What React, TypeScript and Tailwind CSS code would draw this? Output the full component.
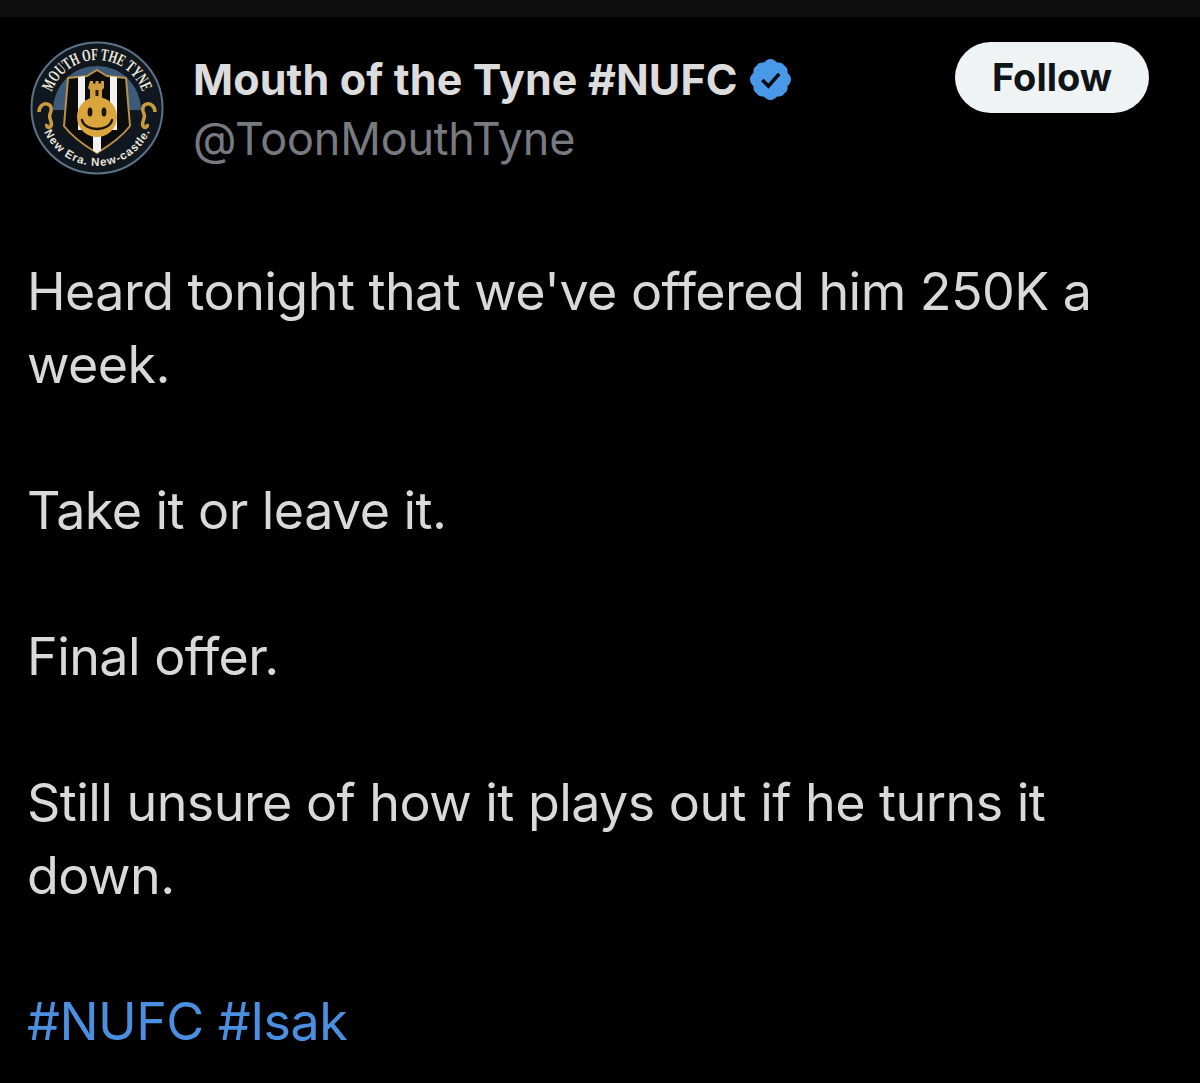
import React from "react";

const shield = "M68 30 L78 36 L97 38 L101 86 C92 98 78 107 68 113 C58 107 44 98 35 86 L39 38 L58 36 Z";

const Badge: React.FC = () => (
  <svg viewBox="0 0 136 136" className="w-[136px] h-[136px] shrink-0">
    <defs>
      <path id="topArc" d="M 20 68 A 48 48 0 0 1 116 68" />
      <path id="bottomArc" d="M 18 68 A 50 50 0 0 0 118 68" />
      <clipPath id="shieldClip">
        <path d={shield} />
      </clipPath>
    </defs>
    <circle cx="68" cy="68" r="65.500" fill="#10171f" stroke="#5d7388" strokeWidth="2" />
    <path d="M24 70 A44 44 0 0 1 112 70 Z" fill="#3d5a78" />
    <text fill="#efe9dc" fontFamily="'Liberation Serif', serif" fontWeight="700" fontSize="17">
      <textPath href="#topArc" startOffset="50%" textAnchor="middle" textLength="118" lengthAdjust="spacingAndGlyphs">
        MOUTH OF THE TYNE
      </textPath>
    </text>
    <text fill="#e8e4da" fontFamily="'Liberation Sans', sans-serif" fontWeight="700" fontSize="11.5" dominantBaseline="hanging">
      <textPath href="#bottomArc" startOffset="50%" textAnchor="middle">
        New Era. New-castle.
      </textPath>
    </text>
    <path d={shield} fill="#0b0b0b" stroke="#b8904a" strokeWidth="2" />
    <g clipPath="url(#shieldClip)">
      <rect x="49" y="30" width="7" height="60" fill="#f2f2f2" />
      <rect x="81" y="30" width="7" height="60" fill="#f2f2f2" />
      <rect x="64" y="95" width="8" height="18" fill="#f2f2f2" />
    </g>
    <path d="M61 41 h3 v2.500 h2.500 v-2.500 h3 v2.500 h2.500 v-2.500 h3 v7 l-2 2 v9 h2 v4 h-16 v-4 h2 v-9 l-2 -2 Z" fill="#cf9f3f" />
    <rect x="66.500" y="50" width="3" height="6" fill="#2a1e08" />
    <circle cx="68" cy="77" r="20" fill="#d9a53c" />
    <ellipse cx="61" cy="72" rx="2.400" ry="4.600" fill="#1b1405" />
    <ellipse cx="75" cy="72" rx="2.400" ry="4.600" fill="#1b1405" />
    <path d="M53 80 C56 92 80 92 83 80" fill="none" stroke="#1b1405" strokeWidth="2.400" strokeLinecap="round" />
    <path d="M10 72 C10 66 15 63 18 64 C23 65 23 70 21 74 C19 78 24 82 22 86 C20 89 17 87 18 84" fill="none" stroke="#c99a3f" strokeWidth="3.500" />
    <path d="M126 72 C126 66 121 63 118 64 C113 65 113 70 115 74 C117 78 112 82 114 86 C116 89 119 87 118 84" fill="none" stroke="#c99a3f" strokeWidth="3.500" />
  </svg>
);

const Verified: React.FC = () => (
  <svg viewBox="0 0 40 40" className="w-[41px] h-[41px] shrink-0">
    <path
      fill="#4a99e9"
      d="M20 0 C23 0 25 2 26.500 3.500 C29 3 32 3.500 33.500 6.500 C36.500 8 37 11 36.500 13.500 C38 15 40 17 40 20 C40 23 38 25 36.500 26.500 C37 29 36.500 32 33.500 33.500 C32 36.500 29 37 26.500 36.500 C25 38 23 40 20 40 C17 40 15 38 13.500 36.500 C11 37 8 36.500 6.500 33.500 C3.500 32 3 29 3.500 26.500 C2 25 0 23 0 20 C0 17 2 15 3.500 13.500 C3 11 3.500 8 6.500 6.500 C8 3.500 11 3 13.500 3.500 C15 2 17 0 20 0 Z"
    />
    <path d="M12 20.500 L18 26.500 L28.500 14.500" fill="none" stroke="#0a0a12" strokeWidth="3.600" />
  </svg>
);

const App: React.FC = () => {
  return (
    <div className="w-[1200px] h-[1083px] overflow-hidden bg-black font-['Inter','Liberation_Sans',sans-serif]">
      <div className="h-[17px] bg-[#0e0e0e]" />

      <div className="flex items-start pl-[29px] pr-[51px] pt-[23px]">
        <Badge />
        <div className="ml-[28px] flex-1 pt-[9px]">
          <div className="flex items-center h-[60px]">
            <span className="text-[43px] font-bold leading-[60px] text-[#dcdcdc] tracking-[0.13px]">
              Mouth of the Tyne #NUFC
            </span>
            <span className="ml-[12px]">
              <Verified />
            </span>
          </div>
          <div className="text-[45px] leading-[60px] text-[#777b80] tracking-[-0.2px]">
            @ToonMouthTyne
          </div>
        </div>
        <button className="mt-[2px] w-[194px] h-[71px] rounded-full bg-[#eff3f4] text-[38px] font-bold text-[#0f1419]">
          Follow
        </button>
      </div>

      <div className="mt-[79px] px-[27px] text-[52px] leading-[73px] text-[#d9d9d9] tracking-[-0.55px]">
        <p>
          Heard tonight that we've offered him 250K a
          <br />
          week.
        </p>
        <p className="mt-[73px]">Take it or leave it.</p>
        <p className="mt-[73px]">Final offer.</p>
        <p className="mt-[73px]">
          Still unsure of how it plays out if he turns it
          <br />
          down.
        </p>
        <p className="mt-[73px] text-[#4a8fe0]">#NUFC #Isak</p>
      </div>
    </div>
  );
};

export default App;
